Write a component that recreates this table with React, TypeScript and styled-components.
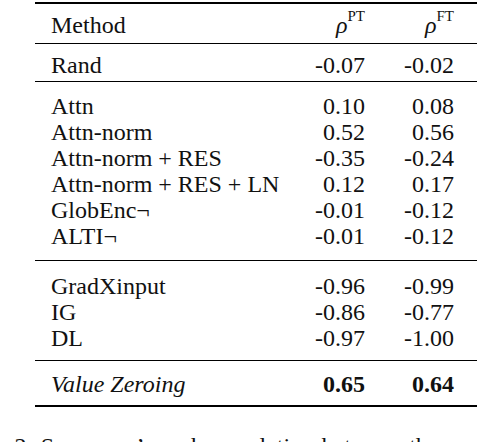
import styled, { createGlobalStyle } from "styled-components";

const GlobalStyle = createGlobalStyle`
  html, body {
    margin: 0;
    padding: 0;
    background: #ffffff;
    overflow: hidden;
  }
  body {
    width: 478px;
    height: 442px;
    font-family: "Liberation Serif", "Times New Roman", serif;
    color: #111111;
  }
`;

interface ResultRow {
  method: string;
  pt: string;
  ft: string;
}

interface Block {
  top: number;
  bottom: number;
  rows: ResultRow[];
}

const blocks: Block[] = [
  { top: 8, bottom: 3, rows: [{ method: "Rand", pt: "-0.07", ft: "-0.02" }] },
  {
    top: 11,
    bottom: 11,
    rows: [
      { method: "Attn", pt: "0.10", ft: "0.08" },
      { method: "Attn-norm", pt: "0.52", ft: "0.56" },
      { method: "Attn-norm + RES", pt: "-0.35", ft: "-0.24" },
      { method: "Attn-norm + RES + LN", pt: "0.12", ft: "0.17" },
      { method: "GlobEnc\u00ac", pt: "-0.01", ft: "-0.12" },
      { method: "ALTI\u00ac", pt: "-0.01", ft: "-0.12" },
    ],
  },
  {
    top: 12,
    bottom: 9,
    rows: [
      { method: "GradXinput", pt: "-0.96", ft: "-0.99" },
      { method: "IG", pt: "-0.86", ft: "-0.77" },
      { method: "DL", pt: "-0.97", ft: "-1.00" },
    ],
  },
];

const Page = styled.div`
  display: flex;
  flex-direction: column;
`;

const Table = styled.div`
  display: flex;
  flex-direction: column;
  width: 442px;
  margin-left: 35px;
`;

const Rule = styled.div<{ $thick?: boolean }>`
  height: ${(p) => (p.$thick ? "2px" : "1px")};
  background: #000000;
`;

const TopRule = styled(Rule)`
  margin-top: 2px;
`;

const Section = styled.div<{ $top: number; $bottom: number }>`
  display: flex;
  flex-direction: column;
  padding: ${(p) => `${p.$top}px 0 ${p.$bottom}px`};
`;

const Row = styled.div`
  display: grid;
  grid-template-columns: 229px 85px 89px;
  padding: 0 23px 0 16px;
  height: 26px;
  line-height: 26px;
  font-size: 24px;
  white-space: nowrap;
`;

const Cell = styled.span<{ $num?: boolean; $bold?: boolean; $italic?: boolean }>`
  text-align: ${(p) => (p.$num ? "right" : "left")};
  font-weight: ${(p) => (p.$bold ? 700 : 400)};
  font-style: ${(p) => (p.$italic ? "italic" : "normal")};
`;

const Rho = styled.span`
  font-style: italic;
`;

const Sup = styled.span`
  font-size: 15px;
  vertical-align: 12px;
  line-height: 0;
`;

const Caption = styled.p`
  margin: 26px 0 0 -46px;
  font-size: 24px;
  line-height: 27px;
  word-spacing: 1.5px;
  white-space: nowrap;
`;

const Header = ({ tag }: { tag: string }) => (
  <Cell $num>
    <Rho>ρ</Rho>
    <Sup>{tag}</Sup>
  </Cell>
);

export default function App() {
  return (
    <Page>
      <GlobalStyle />
      <Table>
        <TopRule $thick />
        <Section $top={8} $bottom={5}>
          <Row>
            <Cell>Method</Cell>
            <Header tag="PT" />
            <Header tag="FT" />
          </Row>
        </Section>
        {blocks.map((b, i) => (
          <div key={i}>
            <Rule />
            <Section $top={b.top} $bottom={b.bottom}>
              {b.rows.map((r) => (
                <Row key={r.method}>
                  <Cell>{r.method}</Cell>
                  <Cell $num>{r.pt}</Cell>
                  <Cell $num>{r.ft}</Cell>
                </Row>
              ))}
            </Section>
          </div>
        ))}
        <Rule />
        <Section $top={10} $bottom={8}>
          <Row>
            <Cell $italic>Value Zeroing</Cell>
            <Cell $num $bold>0.65</Cell>
            <Cell $num $bold>0.64</Cell>
          </Row>
        </Section>
        <Rule $thick />
      </Table>
      <Caption>Table 2: Spearman’s rank correlation between the gradient</Caption>
    </Page>
  );
}
